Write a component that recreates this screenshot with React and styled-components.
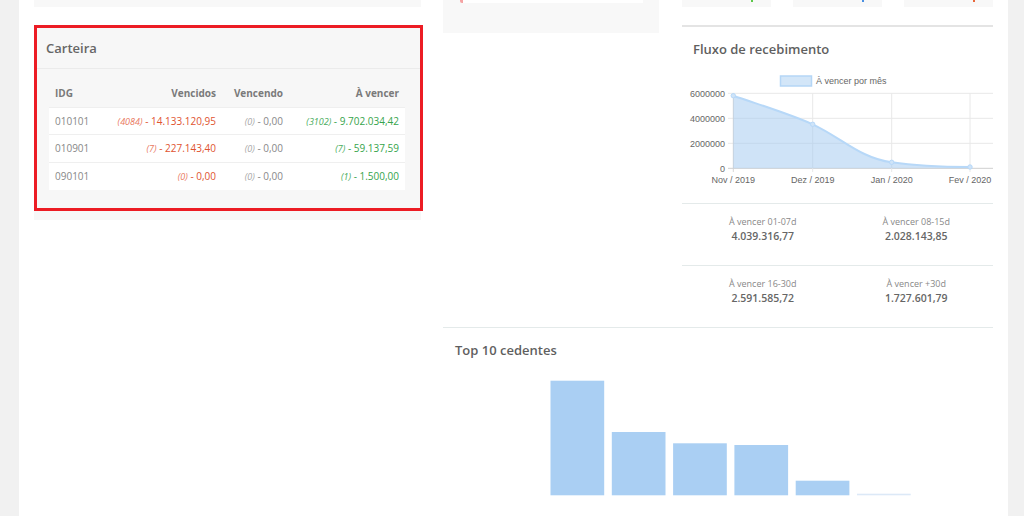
import React from 'react';
import styled, { createGlobalStyle } from 'styled-components';

const GlobalStyle = createGlobalStyle`
  html, body {
    margin: 0;
    padding: 0;
    background: #f1f1f1;
  }
  body {
    font-family: 'Open Sans', 'Liberation Sans', sans-serif;
    color: #777;
  }
  * {
    box-sizing: border-box;
  }
`;

const carteira = [
  { idg: '010101', vencidos: [4084, '14.133.120,95'], vencendo: [0, '0,00'], avencer: [3102, '9.702.034,42'] },
  { idg: '010901', vencidos: [7, '227.143,40'], vencendo: [0, '0,00'], avencer: [7, '59.137,59'] },
  { idg: '090101', vencidos: [0, '0,00'], vencendo: [0, '0,00'], avencer: [1, '1.500,00'] },
];

const stats = [
  { label: 'À vencer 01-07d', value: '4.039.316,77' },
  { label: 'À vencer 08-15d', value: '2.028.143,85' },
  { label: 'À vencer 16-30d', value: '2.591.585,72' },
  { label: 'À vencer +30d', value: '1.727.601,79' },
];

// bar heights in px, taken from the top 10 chart
const cedentes = [114.6, 63.3, 52, 50.3, 14.6, 1.6];

const tones = {
  red: { count: '#e97a5f', value: '#e0532f' },
  grey: { count: '#a8a8a8', value: '#888' },
  green: { count: '#4aad5e', value: '#36a44b' },
};

function Amount({ data, tone }) {
  return (
    <>
      <Count tone={tone}>({data[0]})</Count>
      <Value tone={tone}> - {data[1]}</Value>
    </>
  );
}

function FluxoChart() {
  const yLabels = [
    ['6000000', 35.3],
    ['4000000', 60.3],
    ['2000000', 85.3],
    ['0', 110.3],
  ];
  const xLabels = [
    ['Nov / 2019', 51.3],
    ['Dez / 2019', 130.7],
    ['Jan / 2020', 209.7],
    ['Fev / 2020', 288],
  ];
  const points = [
    [51.3, 37.7],
    [130.7, 66.3],
    [209.7, 104.3],
    [288, 109],
  ];
  const line =
    'M51.3,37.7 C78,47 105,55 130.7,66.3 C160,80 178,100 209.7,104.3 C240,109 265,109 288,109';

  return (
    <ChartSvg width="311" height="145" viewBox="0 0 311 145">
      <rect x="98.5" y="18" width="31" height="10" fill="#d3e6f8" stroke="#b5d6f6" strokeWidth="1.5" />
      <text x="134" y="25.5" fontSize="9" fill="#666" fontFamily="'Liberation Sans', Arial, sans-serif">
        À vencer por mês
      </text>
      {yLabels.map(([label, y]) => (
        <g key={label}>
          <line x1="46" x2="311" y1={y} y2={y} stroke={label === '0' ? '#cfcfcf' : '#e8e8e8'} strokeWidth="1" />
          <text
            x="43"
            y={y + 3.2}
            fontSize="9"
            textAnchor="end"
            fill="#666"
            fontFamily="'Liberation Sans', Arial, sans-serif"
          >
            {label}
          </text>
        </g>
      ))}
      {xLabels.map(([label, x]) => (
        <g key={label}>
          <line x1={x} x2={x} y1="35.3" y2="114" stroke={x === 51.3 ? '#d6d6d6' : '#e8e8e8'} strokeWidth="1" />
          <text
            x={x}
            y="124.5"
            fontSize="9"
            textAnchor="middle"
            fill="#666"
            fontFamily="'Liberation Sans', Arial, sans-serif"
          >
            {label}
          </text>
        </g>
      ))}
      <path d={`${line} L288,110.3 L51.3,110.3 Z`} fill="rgba(160, 200, 240, 0.5)" />
      <path d={line} fill="none" stroke="#b7d8f8" strokeWidth="2" />
      {points.map(([x, y]) => (
        <circle key={x} cx={x} cy={y} r="2.2" fill="#cfe4f8" stroke="#b7d8f8" strokeWidth="1" />
      ))}
    </ChartSvg>
  );
}

function CedentesChart() {
  const bottom = 125.3;
  return (
    <ChartSvg width="550" height="130" viewBox="0 0 550 130">
      {cedentes.map((h, i) => (
        <rect
          key={i}
          x={107.5 + i * 61.3}
          y={bottom - h}
          width="53.7"
          height={h}
          fill={i === cedentes.length - 1 ? '#dce9f7' : '#aacff3'}
        />
      ))}
    </ChartSvg>
  );
}

export default function App() {
  return (
    <>
      <GlobalStyle />
      <Page>
        <LeftColumn>
          <Stub />
          <CardWrap>
            <Card>
              <CardHeader>Carteira</CardHeader>
              <TableBox>
                <Table>
                  <colgroup>
                    <col style={{ width: 58 }} />
                    <col style={{ width: 115 }} />
                    <col style={{ width: 67 }} />
                    <col style={{ width: 116 }} />
                  </colgroup>
                  <thead>
                    <tr>
                      <Th>IDG</Th>
                      <Th align="right">Vencidos</Th>
                      <Th align="right">Vencendo</Th>
                      <Th align="right">À vencer</Th>
                    </tr>
                  </thead>
                  <tbody>
                    {carteira.map((row) => (
                      <tr key={row.idg}>
                        <Td>{row.idg}</Td>
                        <Td align="right">
                          <Amount data={row.vencidos} tone="red" />
                        </Td>
                        <Td align="right">
                          <Amount data={row.vencendo} tone="grey" />
                        </Td>
                        <Td align="right">
                          <Amount data={row.avencer} tone="green" />
                        </Td>
                      </tr>
                    ))}
                  </tbody>
                </Table>
              </TableBox>
            </Card>
            <Highlight />
          </CardWrap>
        </LeftColumn>

        <RightArea>
          <MiddleCard>
            <PinkCap />
            <WhiteBar />
          </MiddleCard>

          <RightColumn>
            <TopBoxes>
              <TopBox>
                <Mark color="#5cc84a" />
              </TopBox>
              <TopBox>
                <Mark color="#4a90e2" />
              </TopBox>
              <TopBox>
                <Mark color="#e8683a" />
              </TopBox>
            </TopBoxes>
            <Divider />
            <SectionTitle>Fluxo de recebimento</SectionTitle>
            <FluxoChart />
            <StatRow>
              {stats.slice(0, 2).map((s) => (
                <Stat key={s.label}>
                  <StatLabel>{s.label}</StatLabel>
                  <StatValue>{s.value}</StatValue>
                </Stat>
              ))}
            </StatRow>
            <StatRow>
              {stats.slice(2).map((s) => (
                <Stat key={s.label}>
                  <StatLabel>{s.label}</StatLabel>
                  <StatValue>{s.value}</StatValue>
                </Stat>
              ))}
            </StatRow>
          </RightColumn>

          <Top10>
            <SectionTitle indent="12px">Top 10 cedentes</SectionTitle>
            <CedentesChart />
          </Top10>
        </RightArea>
      </Page>
    </>
  );
}

const Page = styled.div`
  margin-left: 19px;
  width: 989px;
  height: 516px;
  overflow: hidden;
  background: #fff;
  padding: 0 15px;
  display: grid;
  grid-template-columns: 387px 1fr;
  column-gap: 22px;
  align-items: start;
`;

const LeftColumn = styled.div`
  display: flex;
  flex-direction: column;
`;

const Stub = styled.div`
  height: 7px;
  background: #f8f8f8;
  margin-bottom: 18px;
`;

const CardWrap = styled.div`
  position: relative;
`;

const Card = styled.div`
  height: 195px;
  background: #f7f7f7;
`;

const CardHeader = styled.div`
  height: 44px;
  padding: 14px 12px 0;
  border-bottom: 1px solid #ebebeb;
  font-size: 13px;
  line-height: 18px;
  font-weight: 600;
  color: #666;
`;

const TableBox = styled.div`
  padding: 11px 15px 0;
`;

const Table = styled.table`
  width: 356px;
  table-layout: fixed;
  border-collapse: collapse;
  font-size: 10px;
`;

const Th = styled.th`
  height: 27px;
  padding: 0 6px;
  text-align: ${(p) => p.align || 'left'};
  font-weight: 700;
  color: #7a7a7a;
  white-space: nowrap;
`;

const Td = styled.td`
  height: 27.5px;
  padding: 0 6px;
  background: #fff;
  border-top: 1px solid #efefef;
  text-align: ${(p) => p.align || 'left'};
  color: #888;
  white-space: nowrap;
`;

const Count = styled.span`
  font-size: 9px;
  font-style: italic;
  color: ${(p) => tones[p.tone].count};
`;

const Value = styled.span`
  font-size: 10px;
  color: ${(p) => tones[p.tone].value};
`;

const Highlight = styled.div`
  position: absolute;
  top: 0;
  left: 0;
  width: 389px;
  height: 186px;
  border: 3px solid #ec1c24;
  pointer-events: none;
`;

const RightArea = styled.div`
  display: grid;
  grid-template-columns: 216px 1fr;
  column-gap: 23px;
  align-items: start;
`;

const MiddleCard = styled.div`
  height: 33px;
  background: #f8f8f8;
  padding: 0 16px 0 17px;
  display: flex;
  align-items: flex-start;
`;

const PinkCap = styled.div`
  width: 3px;
  height: 3px;
  border-radius: 0 0 0 2px;
  background: #f5a3a3;
`;

const WhiteBar = styled.div`
  flex: 1;
  height: 3px;
  background: #fff;
`;

const RightColumn = styled.div`
  display: flex;
  flex-direction: column;
  height: 327px;
`;

const TopBoxes = styled.div`
  display: grid;
  grid-template-columns: repeat(3, 1fr);
  column-gap: 22px;
`;

const TopBox = styled.div`
  height: 7px;
  background: #f8f8f8;
  padding-left: 69px;
`;

const Mark = styled.span`
  display: block;
  width: 2px;
  height: 2px;
  background: ${(p) => p.color};
`;

const Divider = styled.div`
  margin-top: 18px;
  height: 2px;
  background: #e4e4e4;
`;

const SectionTitle = styled.div`
  padding: 13px 0 0 ${(p) => p.indent || '11px'};
  font-size: 13px;
  line-height: 18px;
  font-weight: 600;
  color: #5f5f5f;
`;

const ChartSvg = styled.svg`
  display: block;
`;

const StatRow = styled.div`
  height: 62px;
  border-top: 1px solid #e4eaea;
  display: grid;
  grid-template-columns: 1fr 1fr;
  padding: 12px 0 0 4px;
`;

const Stat = styled.div`
  display: flex;
  flex-direction: column;
  align-items: center;
`;

const StatLabel = styled.div`
  font-size: 9px;
  line-height: 12px;
  color: #888;
`;

const StatValue = styled.div`
  margin-top: 1px;
  font-size: 10.5px;
  line-height: 15px;
  font-weight: 600;
  color: #666;
`;

const Top10 = styled.div`
  grid-column: 1 / -1;
  border-top: 1px solid #e4eaea;
  display: flex;
  flex-direction: column;

  & > svg {
    margin-top: 11px;
  }
`;
